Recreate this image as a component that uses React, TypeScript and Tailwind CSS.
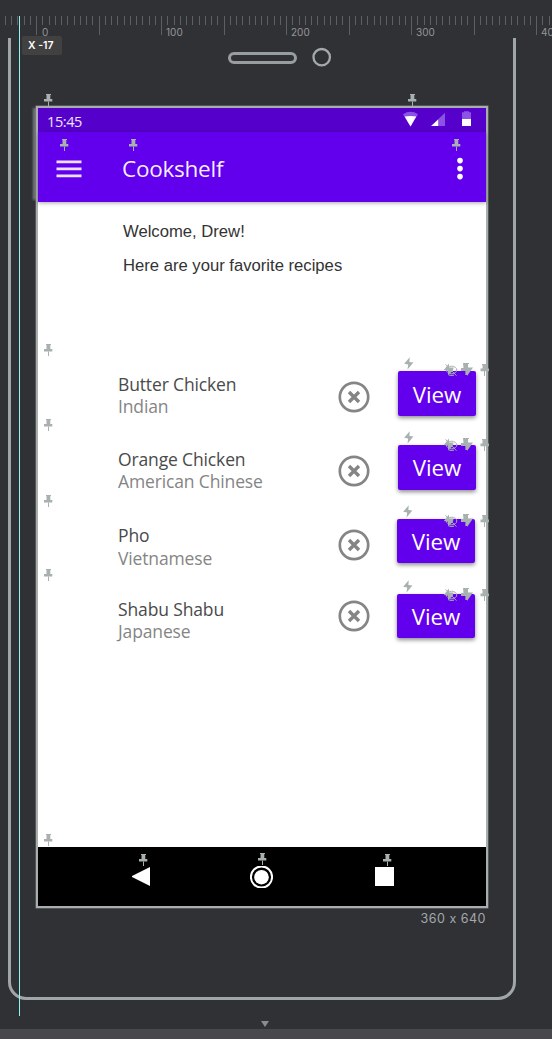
import React from 'react';

const TICKS = Array.from({ length: 88 }, (_, i) => i - 5);

function Ruler() {
  return (
    <svg className="absolute inset-0" width="552" height="38" shapeRendering="crispEdges">
      {TICKS.map((k) => (
        <rect
          key={k}
          x={Math.floor(36.6 + 6.25 * k)}
          y={16}
          width={1}
          height={k % 10 === 0 ? 19 : 9}
          fill="#5e5f62"
        />
      ))}
    </svg>
  );
}

function RulerLabel({ at, children }: { at: string; children: string }) {
  return (
    <span className={`absolute top-[26px] ${at} text-[10px] leading-[13px] text-[#949698]`}>
      {children}
    </span>
  );
}

function Pin({ at }: { at: string }) {
  return (
    <svg className={`absolute ${at}`} width="9" height="12" viewBox="0 0 9 12" fill="#a9b0b0">
      <path d="M2 0H7V1H6.3V5H8.3V7.6H0V5H2.5V1H2Z" />
      <path d="M4 7.6H5V12H4Z" />
    </svg>
  );
}

function Bolt({ at }: { at: string }) {
  return (
    <svg className={`absolute ${at}`} width="10" height="13" viewBox="0 0 10 13" fill="#a9b0b0">
      <path d="M5.7 0.3L0.2 6.8L4.2 7.5L3.5 12.6L9.4 5.5L5.4 4.9Z" />
    </svg>
  );
}

function Markers({ at }: { at: string }) {
  return (
    <svg className={`absolute left-[443px] ${at}`} width="48" height="14" viewBox="0 0 48 14" fill="#a9b0b0">
      <path d="M6 0.6L0.8 7L5 7.8L5 11.5L9.6 8.6L10.6 4.6L6 4.4Z" />
      <ellipse cx="8.6" cy="7" rx="5.2" ry="3.8" fill="none" stroke="#a9b0b0" strokeWidth="1" />
      <path d="M2.6 1.4L13.4 12.6M5 11.6Q8 13 11 12.2" fill="none" stroke="#a9b0b0" />
      <path d="M20 0H26V1H25V4.6H30L24 13V12H22.4V8H18V5H20.5Z" />
      <path d="M39 1H44V2H43.3V5.6H46V8.2H42V13H41V8.2H37.5V5.6H39.5V2H39Z" />
    </svg>
  );
}

function MenuIcon() {
  return (
    <svg width="26" height="18" viewBox="0 0 26 18" fill="#ece0fd">
      <path d="M.5 .4H25.5V3.2H.5ZM.5 7.4H25.5V10.2H.5ZM.5 14.4H25.5V17.2H.5Z" />
    </svg>
  );
}

function StatusBar() {
  return (
    <div className="flex h-6 items-center bg-[#5500cb] pl-[9px] text-white">
      <span className="w-[356px] pt-[3px] text-[14.5px] leading-6 tracking-[-0.4px] text-white/90">15:45</span>
      <svg width="70" height="18" viewBox="403 111 70 18">
        <path d="M403 114.2Q410.5 109.5 418 114.2L410.6 126.5Z" fill="#8b52e4" />
        <path d="M404.6 116.6Q410.5 115.2 416.2 116.6L410.5 126.6Z" fill="#fff" />
        <path d="M445 112.8V126H431Z" fill="#8b52e4" />
        <path d="M438.2 119.4V126H431.2Z" fill="#fff" />
        <path d="M462 112.2H464V111.2H469V112.2H471V119H462Z" fill="#8b52e4" />
        <path d="M462 119H471V126H462Z" fill="#fff" />
      </svg>
    </div>
  );
}

function AppBar() {
  return (
    <header className="z-10 flex h-[70px] items-center bg-[#6200ee] pl-[18px] pr-[23px] text-white shadow-[0_1px_4px_rgba(0,0,0,0.35)]">
      <div className="w-[66px] pt-[3px]">
        <MenuIcon />
      </div>
      <h1 className="flex-1 pt-[3px] text-[22.5px] font-normal leading-[30px] tracking-[-0.25px] text-white/95">
        Cookshelf
      </h1>
      <svg className="mt-[3px]" width="6" height="24" viewBox="0 0 6 24" fill="#fff">
        <circle cx="3" cy="3.6" r="2.8" />
        <circle cx="3" cy="11.6" r="2.8" />
        <circle cx="3" cy="19.6" r="2.8" />
      </svg>
    </header>
  );
}

function RemoveIcon() {
  return (
    <svg width="32" height="32" viewBox="0 0 32 32" fill="none" stroke="#858585">
      <circle cx="16" cy="16" r="14.2" strokeWidth="2.7" />
      <path d="M11 11L21 21M21 11L11 21" strokeWidth="3.4" />
    </svg>
  );
}

type Recipe = {
  name: string;
  cuisine: string;
  row: string;
  sub: string;
  icon: string;
  button: string;
};

const RECIPES: Recipe[] = [
  { name: 'Butter Chicken', cuisine: 'Indian', row: 'h-[75px]', sub: 'mt-0', icon: 'mt-[18px]', button: 'mt-2 ml-[28px] h-[45px] pt-[3px]' },
  { name: 'Orange Chicken', cuisine: 'American Chinese', row: 'h-[76px]', sub: 'mt-0', icon: 'mt-[17px]', button: 'mt-[7px] ml-[28px] h-[45px] pt-px' },
  { name: 'Pho', cuisine: 'Vietnamese', row: 'h-[74px]', sub: 'mt-px', icon: 'mt-[15px]', button: 'mt-[5px] ml-[27px] h-[44px] pt-[2px]' },
  { name: 'Shabu Shabu', cuisine: 'Japanese', row: 'h-[74px]', sub: 'mt-0', icon: 'mt-3', button: 'mt-[6px] ml-[27px] h-[44px] pt-[2px]' },
];

function RecipeRow({ recipe }: { recipe: Recipe }) {
  return (
    <li className={`flex items-start pl-20 ${recipe.row}`}>
      <div className="w-[220px] pt-[10px] text-[17.5px] leading-[22px] tracking-[-0.14px]">
        <p className="text-[#4a4a4a]">{recipe.name}</p>
        <p className={`text-[#858585] ${recipe.sub}`}>{recipe.cuisine}</p>
      </div>
      <div className={recipe.icon}>
        <RemoveIcon />
      </div>
      <button
        className={`w-[78px] rounded-[2px] bg-[#6200ee] text-[22.3px] leading-[30px] text-white shadow-[0_2px_4px_rgba(0,0,0,0.45)] ${recipe.button}`}
      >
        View
      </button>
    </li>
  );
}

function NavBar() {
  return (
    <nav className="flex h-[59px] bg-black pl-[94px]">
      <svg className="mt-[20px]" width="18" height="19" viewBox="0 0 18 19" fill="#fff">
        <path d="M18 0V19L0 10V9Z" />
      </svg>
      <svg className="ml-[100px] mt-[19px]" width="23" height="22" viewBox="0 0 23 22" fill="none" stroke="#fff">
        <circle cx="11.5" cy="11" r="10.6" strokeWidth="2" />
        <circle cx="11.5" cy="11.2" r="7.3" fill="#fff" stroke="none" />
      </svg>
      <div className="ml-[102px] mt-[20px] size-[19px] bg-white" />
    </nav>
  );
}

export default function App() {
  return (
    <div className="relative flex h-[1039px] w-[552px] flex-col overflow-hidden bg-[#303135] font-['Open_Sans',sans-serif]">
      <div className="relative h-[38px] shrink-0 overflow-hidden font-[Inter,sans-serif]">
        <Ruler />
        <RulerLabel at="left-[42px]">0</RulerLabel>
        <RulerLabel at="left-[166px]">100</RulerLabel>
        <RulerLabel at="left-[291px]">200</RulerLabel>
        <RulerLabel at="left-[416px]">300</RulerLabel>
        <RulerLabel at="left-[541px]">400</RulerLabel>
      </div>

      <div className="isolate ml-2 h-[962px] w-[508px] rounded-b-[18px] border-x-[3px] border-b-[3px] border-[#a0a6a8]">
        <div className="flex h-[68px] items-start pl-[217px] pt-[9px]">
          <div className="mt-[5px] h-[12px] w-[69px] rounded-full border-[3px] border-[#989ea0]" />
          <svg className="ml-[15px]" width="20" height="20" viewBox="0 0 20 20" fill="none" stroke="#a4aaac">
            <circle cx="9.7" cy="10.2" r="8.2" strokeWidth="2.3" />
          </svg>
        </div>
        <main className="ml-[25px] flex h-[802px] w-[452px] flex-col border-2 border-[#a8adae] bg-white shadow-[0_0_0_0.5px_#777b7d]">
          <StatusBar />
          <AppBar />
          <section className="h-[161px] pl-[85px] pt-[19px] font-['Liberation_Sans',Arial,sans-serif] text-[16.65px] leading-[22px] text-[#333]">
            <p>Welcome, Drew!</p>
            <p className="mt-3">Here are your favorite recipes</p>
          </section>
          <ul className="flex-1">
            {RECIPES.map((recipe) => (
              <RecipeRow key={recipe.name} recipe={recipe} />
            ))}
          </ul>
          <NavBar />
        </main>
        <p className="pr-[27px] pt-[2px] text-right font-[Inter,sans-serif] text-[12.5px] leading-[18px] tracking-[0.5px] text-[#a4a8aa]">
          360 x 640
        </p>
      </div>

      <div className="flex h-[29px] shrink-0 items-end pb-[1px] pl-[261px]">
        <svg width="8" height="7" viewBox="0 0 8 7" fill="#8b8c8f">
          <path d="M0 0H8L4 6Z" />
        </svg>
      </div>
      <footer className="h-[10px] shrink-0 bg-[#49494d]" />

      <div className="absolute left-[33px] top-[108px] h-[92px] w-[3px] bg-[#a8adae]/60 blur-[1px]" />
      <div className="absolute left-[19px] top-4 h-[1000px] w-px bg-[#8ef5f5]" />
      <div className="absolute left-[22px] top-9 flex h-[19px] w-10 items-center rounded-[2px] bg-[#414141] pl-[6px] pt-px font-[Inter,sans-serif] text-[10.5px] font-semibold text-white">
        X -17
      </div>

      <Pin at="left-[44px] top-[94px]" />
      <Pin at="left-[408px] top-[94px]" />
      <Pin at="left-[60px] top-[139px]" />
      <Pin at="left-[129px] top-[139px]" />
      <Pin at="left-[452px] top-[139px]" />
      <Pin at="left-[44px] top-[344px]" />
      <Pin at="left-[44px] top-[419px]" />
      <Pin at="left-[44px] top-[495px]" />
      <Pin at="left-[44px] top-[569px]" />
      <Pin at="left-[44px] top-[834px]" />
      <Pin at="left-[139px] top-[854px]" />
      <Pin at="left-[258px] top-[853px]" />
      <Pin at="left-[383px] top-[854px]" />

      <Bolt at="left-[404px] top-[357px]" />
      <Bolt at="left-[404px] top-[431px]" />
      <Bolt at="left-[403px] top-[505px]" />
      <Bolt at="left-[403px] top-[580px]" />

      <Markers at="top-[363px]" />
      <Markers at="top-[438px]" />
      <Markers at="top-[514px]" />
      <Markers at="top-[588px]" />
    </div>
  );
}
